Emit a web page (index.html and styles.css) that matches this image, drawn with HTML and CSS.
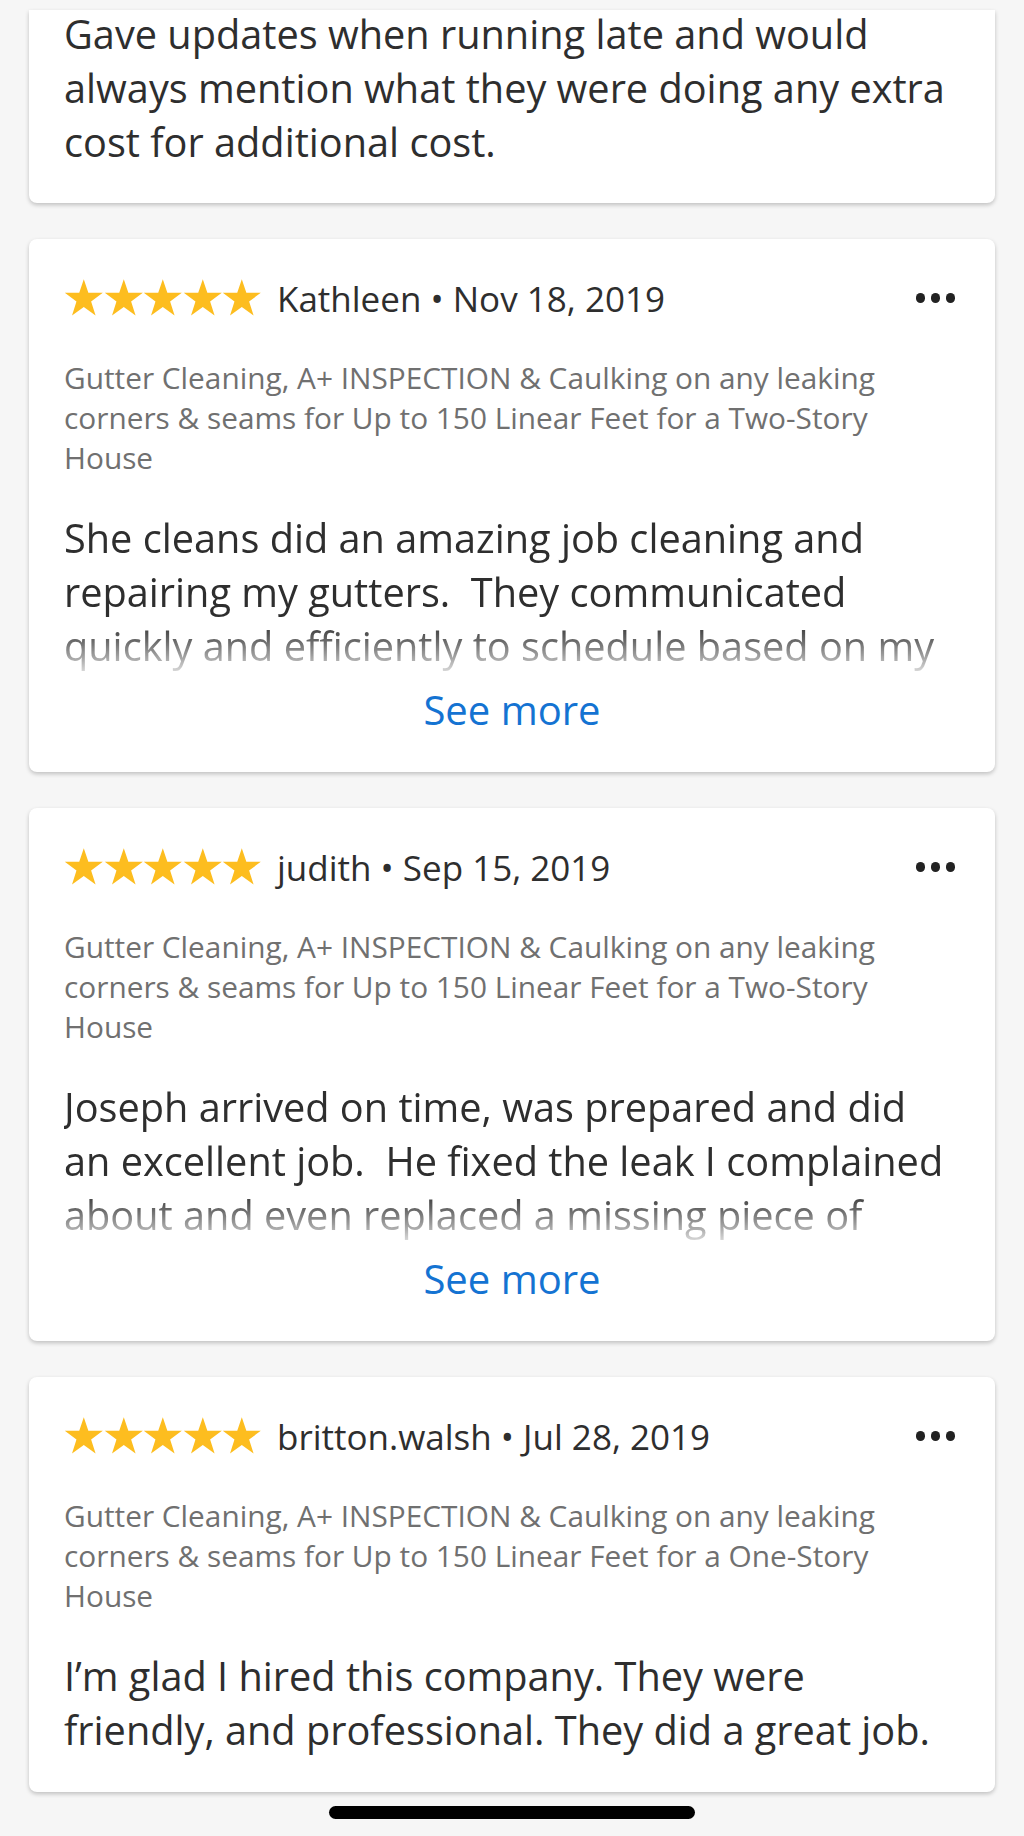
FILE: index.html
```html
<!DOCTYPE html>
<html lang="en">
<head>
    <meta charset="UTF-8">
    <title>Reviews</title>
    <link rel="stylesheet" href="styles.css">
</head>
<body>
    <div class="reviews">
        <div class="card card-top">
            <p class="review-text first-text">Gave updates when running late and would always mention what they were doing any extra cost for additional cost.</p>
        </div>

        <div class="card">
            <div class="review-head">
                <div class="stars">
                    <svg class="star" viewBox="0 0 40 40"><path d="M20 1L24.6 14.7L39.2 14.8L27.4 23.5L31.9 37.6L20 29L8.1 37.6L12.6 23.5L0.8 14.8L15.4 14.7Z"/></svg>
                    <svg class="star" viewBox="0 0 40 40"><path d="M20 1L24.6 14.7L39.2 14.8L27.4 23.5L31.9 37.6L20 29L8.1 37.6L12.6 23.5L0.8 14.8L15.4 14.7Z"/></svg>
                    <svg class="star" viewBox="0 0 40 40"><path d="M20 1L24.6 14.7L39.2 14.8L27.4 23.5L31.9 37.6L20 29L8.1 37.6L12.6 23.5L0.8 14.8L15.4 14.7Z"/></svg>
                    <svg class="star" viewBox="0 0 40 40"><path d="M20 1L24.6 14.7L39.2 14.8L27.4 23.5L31.9 37.6L20 29L8.1 37.6L12.6 23.5L0.8 14.8L15.4 14.7Z"/></svg>
                    <svg class="star" viewBox="0 0 40 40"><path d="M20 1L24.6 14.7L39.2 14.8L27.4 23.5L31.9 37.6L20 29L8.1 37.6L12.6 23.5L0.8 14.8L15.4 14.7Z"/></svg>
                </div>
                <span class="reviewer">Kathleen &bull; Nov 18, 2019</span>
                <div class="more-menu"><span></span><span></span><span></span></div>
            </div>
            <p class="service">Gutter Cleaning, A+ INSPECTION &amp; Caulking on any leaking corners &amp; seams for Up to 150 Linear Feet for a Two-Story House</p>
            <p class="review-text clipped">She cleans did an amazing job cleaning and repairing my gutters.&nbsp; They communicated quickly and efficiently to schedule based on my</p>
            <div class="see-more">See more</div>
        </div>

        <div class="card">
            <div class="review-head">
                <div class="stars">
                    <svg class="star" viewBox="0 0 40 40"><path d="M20 1L24.6 14.7L39.2 14.8L27.4 23.5L31.9 37.6L20 29L8.1 37.6L12.6 23.5L0.8 14.8L15.4 14.7Z"/></svg>
                    <svg class="star" viewBox="0 0 40 40"><path d="M20 1L24.6 14.7L39.2 14.8L27.4 23.5L31.9 37.6L20 29L8.1 37.6L12.6 23.5L0.8 14.8L15.4 14.7Z"/></svg>
                    <svg class="star" viewBox="0 0 40 40"><path d="M20 1L24.6 14.7L39.2 14.8L27.4 23.5L31.9 37.6L20 29L8.1 37.6L12.6 23.5L0.8 14.8L15.4 14.7Z"/></svg>
                    <svg class="star" viewBox="0 0 40 40"><path d="M20 1L24.6 14.7L39.2 14.8L27.4 23.5L31.9 37.6L20 29L8.1 37.6L12.6 23.5L0.8 14.8L15.4 14.7Z"/></svg>
                    <svg class="star" viewBox="0 0 40 40"><path d="M20 1L24.6 14.7L39.2 14.8L27.4 23.5L31.9 37.6L20 29L8.1 37.6L12.6 23.5L0.8 14.8L15.4 14.7Z"/></svg>
                </div>
                <span class="reviewer">judith &bull; Sep 15, 2019</span>
                <div class="more-menu"><span></span><span></span><span></span></div>
            </div>
            <p class="service">Gutter Cleaning, A+ INSPECTION &amp; Caulking on any leaking corners &amp; seams for Up to 150 Linear Feet for a Two-Story House</p>
            <p class="review-text clipped">Joseph arrived on time, was prepared and did an excellent job.&nbsp; He fixed the leak I complained about and even replaced a missing piece of</p>
            <div class="see-more">See more</div>
        </div>

        <div class="card">
            <div class="review-head">
                <div class="stars">
                    <svg class="star" viewBox="0 0 40 40"><path d="M20 1L24.6 14.7L39.2 14.8L27.4 23.5L31.9 37.6L20 29L8.1 37.6L12.6 23.5L0.8 14.8L15.4 14.7Z"/></svg>
                    <svg class="star" viewBox="0 0 40 40"><path d="M20 1L24.6 14.7L39.2 14.8L27.4 23.5L31.9 37.6L20 29L8.1 37.6L12.6 23.5L0.8 14.8L15.4 14.7Z"/></svg>
                    <svg class="star" viewBox="0 0 40 40"><path d="M20 1L24.6 14.7L39.2 14.8L27.4 23.5L31.9 37.6L20 29L8.1 37.6L12.6 23.5L0.8 14.8L15.4 14.7Z"/></svg>
                    <svg class="star" viewBox="0 0 40 40"><path d="M20 1L24.6 14.7L39.2 14.8L27.4 23.5L31.9 37.6L20 29L8.1 37.6L12.6 23.5L0.8 14.8L15.4 14.7Z"/></svg>
                    <svg class="star" viewBox="0 0 40 40"><path d="M20 1L24.6 14.7L39.2 14.8L27.4 23.5L31.9 37.6L20 29L8.1 37.6L12.6 23.5L0.8 14.8L15.4 14.7Z"/></svg>
                </div>
                <span class="reviewer">britton.walsh &bull; Jul 28, 2019</span>
                <div class="more-menu"><span></span><span></span><span></span></div>
            </div>
            <p class="service">Gutter Cleaning, A+ INSPECTION &amp; Caulking on any leaking corners &amp; seams for Up to 150 Linear Feet for a One-Story House</p>
            <p class="review-text">I&rsquo;m glad I hired this company. They were friendly, and professional. They did a great job.</p>
        </div>
    </div>

    <div class="home-bar"></div>
</body>
</html>
```

FILE: styles.css
```css
body {
    font-family: "Open Sans", "Liberation Sans", sans-serif;
    background-color: #f6f6f6;
    margin: 0;
    padding: 10px 29px 0;
    color: #2e2e2e;
}

.reviews {
    display: flex;
    flex-direction: column;
    gap: 36px;
}

.card {
    background-color: #fff;
    border-radius: 8px;
    box-shadow: 0 2px 4px rgba(0, 0, 0, 0.22);
    padding: 40px 35px 35px;
}

.card-top {
    padding-top: 0;
    padding-bottom: 34px;
    border-radius: 0 0 8px 8px;
}

p {
    margin: 0;
}

.review-text {
    font-size: 39.7px;
    line-height: 54px;
    margin-top: 33px;
}

.first-text {
    margin-top: -3px;
}

.clipped {
    max-height: 162px;
    overflow: hidden;
    -webkit-mask-image: linear-gradient(to bottom, #000 110px, rgba(0, 0, 0, 0.75) 128px, rgba(0, 0, 0, 0.2) 160px);
    mask-image: linear-gradient(to bottom, #000 110px, rgba(0, 0, 0, 0.75) 128px, rgba(0, 0, 0, 0.2) 160px);
}

.review-head {
    display: flex;
    align-items: center;
    height: 38px;
}

.stars {
    display: flex;
}

.star {
    width: 39.6px;
    height: 40px;
    fill: #fdbd1f;
}

.reviewer {
    font-size: 35px;
    margin-left: 15px;
    color: #2e2e2e;
}

.more-menu {
    margin-left: auto;
    margin-right: 5px;
    display: flex;
    gap: 5.5px;
}

.more-menu span {
    width: 9.5px;
    height: 9.5px;
    border-radius: 50%;
    background-color: #222;
}

.service {
    font-size: 29.8px;
    line-height: 40px;
    color: #707070;
    margin-top: 41px;
}

.see-more {
    margin-top: 10px;
    font-size: 40px;
    line-height: 54px;
    text-align: center;
    color: #1473d2;
}

.home-bar {
    width: 366px;
    height: 13px;
    border-radius: 7px;
    background-color: #000;
    margin: 14px auto 0;
}
```
